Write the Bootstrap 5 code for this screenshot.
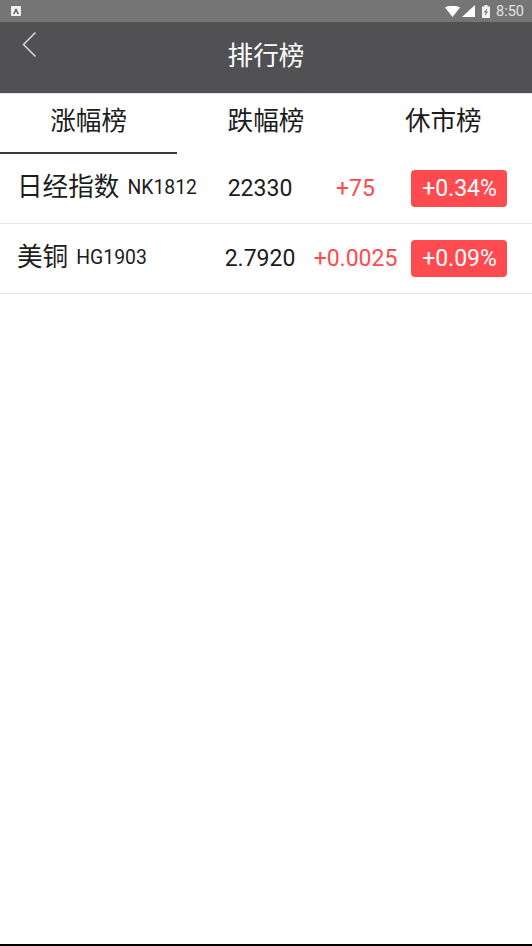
<!DOCTYPE html>
<html lang="zh">
<head>
<meta charset="utf-8">
<title>排行榜</title>
<link href="https://cdn.jsdelivr.net/npm/bootstrap@5.3.0/dist/css/bootstrap.min.css" rel="stylesheet">
<style>
html,body{height:100%;}
body{font-family:Roboto,"Noto Sans CJK SC",sans-serif;background:#fff;color:#1c1c1c;overflow:hidden;}
.shell{height:946px;border-bottom:2px solid #000;}
.statusbar{height:22px;background:#757575;color:#e4e4e4;font-size:14.5px;padding:0 8px 0 11px;}
.appicon{width:10px;height:10px;background:#f2f2f2;border-radius:1px;}
.st-wifi{margin-right:2px;}
.st-cell{margin-right:7px;}
.st-time{margin-left:6px;line-height:1;padding-top:3px;}
.appbar{height:71px;background:#515153;color:#fff;}
.appbar-title{font-size:25.6px;line-height:1;padding-bottom:1px;}
.backbtn{left:22px;top:9px;}
.tabline{height:61px;border-top:1px solid #e4e4e4;}
.tabitem{flex:1 1 0;font-size:25.6px;line-height:1;padding-top:15px;text-align:center;color:#1c1c1c;}
.tabitem.on{border-bottom:2px solid #3a3a3a;}
.quote{height:70px;border-bottom:1px solid #e6e6e6;}
.q-name{width:210px;padding-left:17px;white-space:nowrap;gap:8px;}
.q-cn{font-size:25.6px;line-height:1;padding-bottom:1px;}
.q-code{font-size:19.4px;line-height:1;padding-bottom:2px;}
.q-price{width:100px;text-align:center;font-size:23px;padding-top:2px;}
.q-change{width:90px;text-align:center;font-size:23px;color:#ff4b50;white-space:nowrap;padding:2px 0 0 1px;}
.q-pill{width:96px;height:37px;margin-left:11px;background:#ff4b50;color:#fff;font-size:23px;border-radius:4px;padding:2px 0 0 1px;}
</style>
</head>
<body>
<div class="shell d-flex flex-column">
  <div class="statusbar d-flex align-items-center justify-content-between">
    <div class="appicon d-flex align-items-center justify-content-center">
      <svg width="8" height="8" viewBox="0 0 8 8"><path d="M1 7L4 1l3 6H5.400L4 4 2.600 7z" fill="#555"/></svg>
    </div>
    <div class="d-flex align-items-center">
      <svg class="st-wifi" width="15" height="11" viewBox="0 0 15 11"><path d="M0 1.500Q7.500-2 15 1.500L7.500 11z" fill="#fff"/></svg>
      <svg class="st-cell" width="13" height="12" viewBox="0 0 13 12"><path d="M13 0V12H0z" fill="#fff"/></svg>
      <svg width="8" height="13" viewBox="0 0 8 13"><path fill-rule="evenodd" d="M2.500 0H5.500V1.500H8V13H0V1.500H2.500zM5 3 2 7.500H3.600L3 11 6 6.500H4.400z" fill="#f2f2f2"/></svg>
      <span class="st-time">8:50</span>
    </div>
  </div>
  <div class="appbar position-relative d-flex align-items-center justify-content-center">
    <svg class="backbtn position-absolute" width="15" height="27" viewBox="0 0 15 27"><path d="M13.500 1.500 1.500 13.500 13.500 25.500" fill="none" stroke="#d8d8d8" stroke-width="1.500"/></svg>
    <div class="appbar-title">排行榜</div>
  </div>
  <div class="tabline d-flex">
    <div class="tabitem on">涨幅榜</div>
    <div class="tabitem">跌幅榜</div>
    <div class="tabitem">休市榜</div>
  </div>
  <div class="quote d-flex align-items-center">
    <div class="q-name d-flex align-items-center"><span class="q-cn">日经指数</span><span class="q-code">NK1812</span></div>
    <div class="q-price">22330</div>
    <div class="q-change">+75</div>
    <div class="q-pill d-flex align-items-center justify-content-center">+0.34%</div>
  </div>
  <div class="quote d-flex align-items-center">
    <div class="q-name d-flex align-items-center"><span class="q-cn">美铜</span><span class="q-code">HG1903</span></div>
    <div class="q-price">2.7920</div>
    <div class="q-change">+0.0025</div>
    <div class="q-pill d-flex align-items-center justify-content-center">+0.09%</div>
  </div>
</div>
<script src="https://cdn.jsdelivr.net/npm/bootstrap@5.3.0/dist/js/bootstrap.bundle.min.js"></script>
</body>
</html>
